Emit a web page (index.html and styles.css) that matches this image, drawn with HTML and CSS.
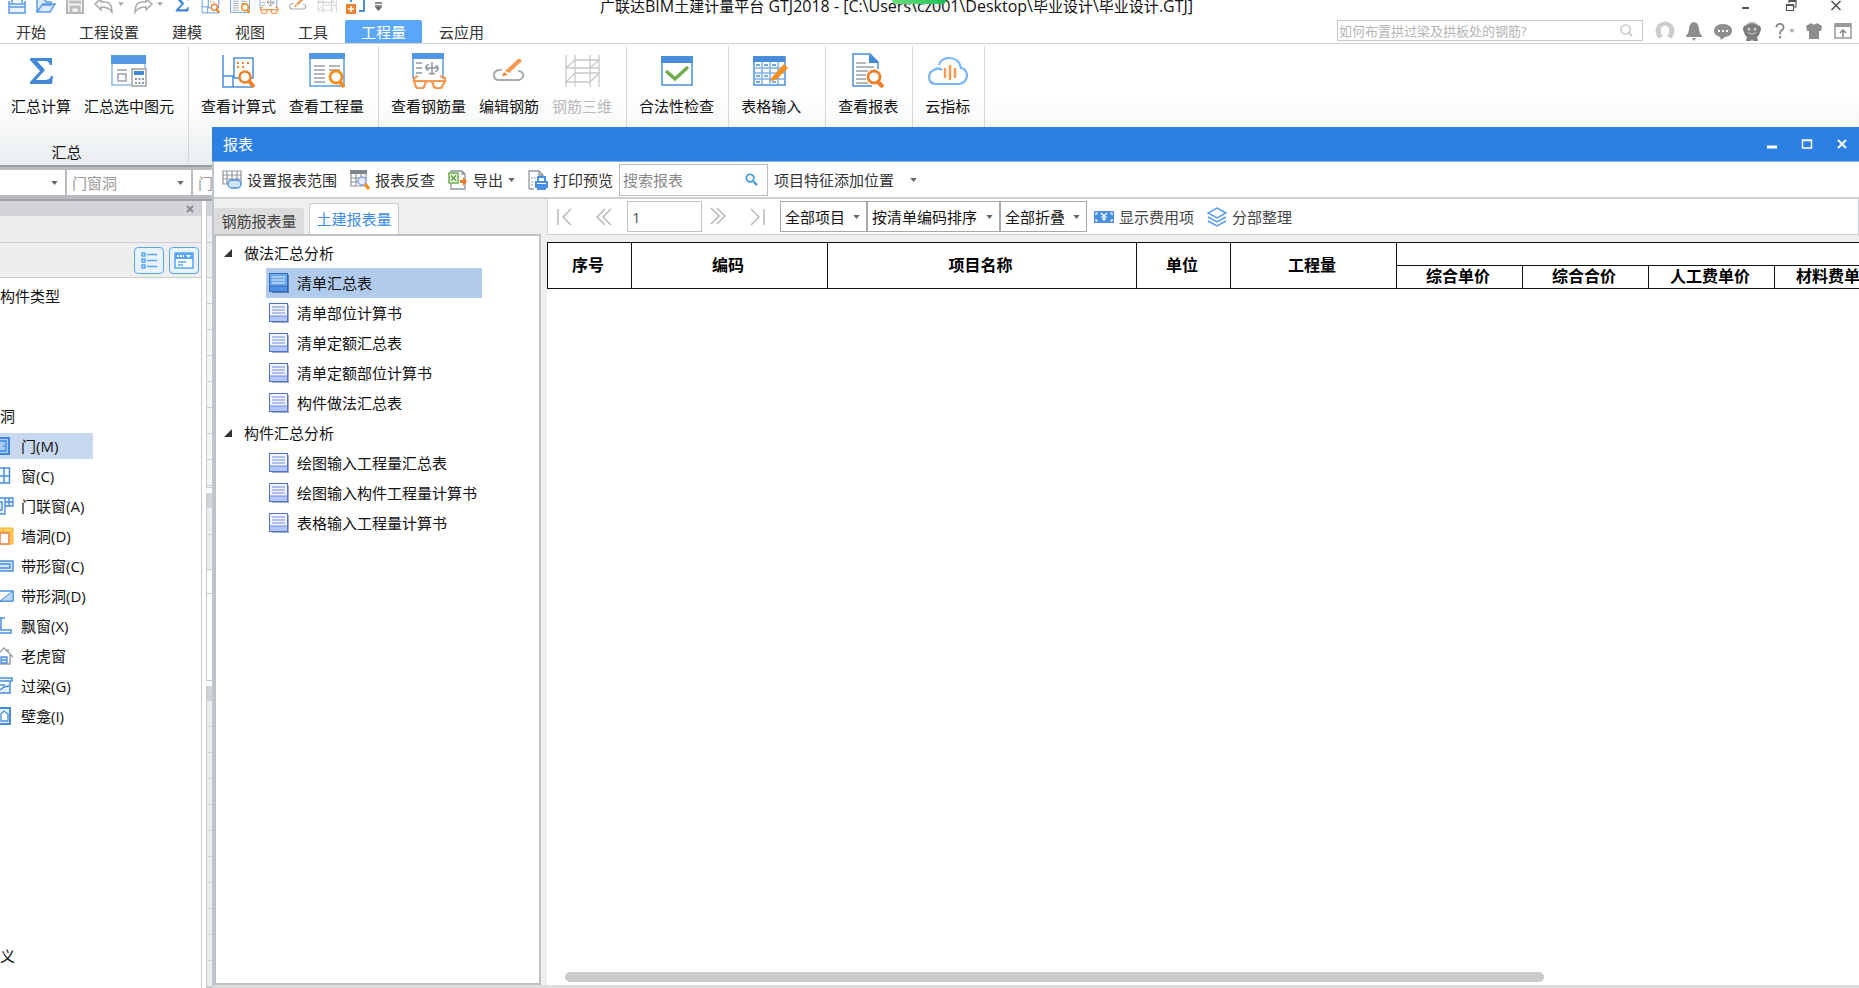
FILE: index.html
```html
<!DOCTYPE html>
<html lang="zh-CN">
<head>
<meta charset="utf-8">
<title>广联达BIM土建计量平台 GTJ2018</title>
<link rel="stylesheet" href="styles.css">
</head>
<body>
<svg class="sprite" aria-hidden="true">
  <symbol id="sigma" viewBox="0 0 24 26"><path fill="#4288d8" d="M1 0H23V7H21Q20 3 16 3H8L16 12 7 22H16Q21 22 22 18H24L23 26H1V24L11 13 1 2Z"/></symbol>
  <symbol id="formula" viewBox="0 0 36 36"><path d="M2 2V34H32M2 23H12V34" fill="none" stroke="#4a8edb" stroke-width="1.500"/><rect x="13" y="5" width="19" height="20" fill="#fff" stroke="#4a8edb" stroke-width="1.500"/><path d="M16 10H30M16 14H24" stroke="#f08030" stroke-width="2" stroke-dasharray="2 3"/><circle cx="24" cy="24" r="5.500" fill="#fff" stroke="#f0802c" stroke-width="2.500"/><path d="M28 28L33 34" stroke="#f0802c" stroke-width="4"/></symbol>
  <symbol id="quantity" viewBox="0 0 36 36"><rect x="1" y="1" width="34" height="32" fill="#fff" stroke="#5a9be6" stroke-width="1.500"/><path fill="#5398e6" d="M0 0H36V6H0Z"/><path d="M5 13H16M5 17H16M5 21H16M5 25H16M5 29H16M20 13H31M20 17H31" stroke="#98a0a8" stroke-width="1.500"/><circle cx="27" cy="24" r="6" fill="#fff" stroke="#f0901e" stroke-width="2.800"/><path d="M31 29L35 34" stroke="#f0901e" stroke-width="4"/></symbol>
  <symbol id="rebar" viewBox="0 0 36 36"><path d="M2 26V1H32V26" fill="#fff" stroke="#5a9be6" stroke-width="1.500"/><path fill="#5398e6" d="M1 0H33V6H1Z"/><path d="M5 10H11M5 15H11M5 20H11M21 9V21M15 15H27M18 12C14 11 14 18 18 17M24 13C28 12 28 19 24 18M18 20Q20 22 24 20" fill="none" stroke="#8f979d" stroke-width="1.500"/><path d="M7 23L3 25V28M29 23L34 25V28M3 28H15L13 34Q9 37 5 34ZM21 28H34L31 34Q27 37 23 34ZM15 29Q18 27 21 29" fill="none" stroke="#f79850" stroke-width="2.200"/></symbol>
  <symbol id="edit" viewBox="0 0 36 36"><path d="M12 17H8Q3 18 3 22Q3 27 8 27H28Q33 25 32 21Q31 18 27 18" fill="none" stroke="#a4acb0" stroke-width="2"/><path d="M11 15L24 3 33 12 22 22H10Z" fill="#fff"/><path d="M14 18L27 6Q29 5 31 8L18 20Z" fill="#f79850"/><path d="M13 19L17 22 11 23Z" fill="#f08030"/></symbol>
  <symbol id="cage" viewBox="0 0 36 36"><path d="M2 2V34M11 2V34M26 2V34M35 2V34M2 15H26L35 7H11ZM2 29H26L35 20H11ZM2 15H35" fill="none" stroke="#c9c9c9" stroke-width="1.300"/></symbol>
  <symbol id="summary" viewBox="0 0 36 36"><path d="M1 4H34V15M20 32H1V4" fill="#fff" stroke="#8fb9e8" stroke-width="1.500"/><path fill="#5398e6" d="M0 2H35V11H0Z"/><path d="M6 17H16M22 17H29M7 21H15V28H7Z" fill="none" stroke="#98a0a8" stroke-width="1.500"/><rect x="21" y="16" width="14" height="17" fill="#fff" stroke="#98a0a8" stroke-width="1.500"/><path fill="#4288d8" d="M23 18H33V22H23Z"/><path d="M24 26H33M24 30H33" stroke="#8c949a" stroke-width="2" stroke-dasharray="2 1.500"/></symbol>
  <symbol id="check" viewBox="0 0 36 36"><rect x="3" y="4" width="30" height="28" fill="#fff" stroke="#4a8edb" stroke-width="1.500"/><path fill="#4a8edb" d="M2 3H34V10H2Z"/><path d="M7 18L16 26 29 14" fill="none" stroke="#6fad4d" stroke-width="3.500"/></symbol>
  <symbol id="sheet" viewBox="0 0 36 36"><rect x="1" y="4" width="31" height="28" fill="#fff" stroke="#4a8edb" stroke-width="1.500"/><path fill="#4a8edb" d="M0 3H32V9H0Z"/><path d="M1 15H32M1 20H32M1 26H32M9 9V32M17 9V32M25 9V32" stroke="#7fb2ea" stroke-width="1.500"/><path d="M3 12H7M11 12H15M19 12H23M3 23H7M11 23H15M3 29H7M19 29H23" stroke="#4a8edb" stroke-width="1.500"/><path d="M19 24L31 11 35 15 23 27 17 28Z" fill="#f0901e"/></symbol>
  <symbol id="report" viewBox="0 0 36 36"><path d="M28 16V9L20 1H3V33H22" fill="#fff" stroke="#4a8edb" stroke-width="1.500"/><path d="M19 1V10H29Z" fill="#4288d8"/><path d="M6 10H16M6 14H24M6 18H18M6 22H16M6 26H16M6 30H18" stroke="#98a0a8" stroke-width="1.500"/><circle cx="24" cy="24" r="6" fill="#fff" stroke="#f0802c" stroke-width="2.800"/><path d="M28 29L33 34" stroke="#f0802c" stroke-width="4"/></symbol>
  <symbol id="cloud" viewBox="0 0 40 36"><path d="M14 17Q10 14 6 17Q1 19 1 25Q2 31 8 31H31Q38 30 39 23Q39 16 33 15Q31 5 21 5Q13 5 11 12" fill="none" stroke="#78b6f8" stroke-width="2.200"/><path d="M17 15V25M22 12V27M27 15V25" stroke="#f79850" stroke-width="2.400"/></symbol>
  <symbol id="listdoc" viewBox="0 0 20 20"><path fill="#7d8dab" d="M3 2H20V20H3Z" opacity=".7"/><rect x=".5" y=".5" width="18" height="18" fill="#f2f5ff" stroke="#5273cc"/><path fill="#b4c7fc" d="M1 13H18V18H1Z"/><path d="M3 4H16M3 7H16M3 10H16M1 13H18" stroke="#6f8bd6"/></symbol>
  <symbol id="listdoc-on" viewBox="0 0 20 20"><path fill="#4a6a9c" d="M3 2H20V20H3Z" opacity=".8"/><rect x=".5" y=".5" width="18" height="18" fill="#6fa9ea" stroke="#2f68bd"/><path fill="#4f92e4" d="M1 13H18V18H1Z"/><path d="M3 4H16M3 7H16M3 10H16" stroke="#d9e9fb"/><path d="M1 13H18" stroke="#2f68bd"/></symbol>
  <symbol id="caret" viewBox="0 0 8 5"><path fill="currentColor" d="M0 0H8L4 5Z"/></symbol>
</svg>

<header class="titlebar">
  <div class="quick">
    <button aria-label="新建"><svg viewBox="0 0 20 20"><path d="M2 7V19H18V7M5 9V0H15V9M2 10H18M2 13H18" fill="#eaf3fe" stroke="#5a9be6" stroke-width="1.500"/></svg></button>
    <button aria-label="打开"><svg viewBox="0 0 20 20"><path d="M1 18V5H8L10 8H15V11H6L1 18H14L19 10H6" fill="#dcebfd" stroke="#5a9be6" stroke-width="1.500"/></svg></button>
    <button aria-label="保存"><svg viewBox="0 0 20 20"><path d="M2 0H18V19H2Z" fill="#f2f2f2" stroke="#b4b4b4" stroke-width="2"/><path d="M4 8H16M6 19V13H14V19" fill="none" stroke="#bdbdbd" stroke-width="3"/></svg></button>
    <button class="split" aria-label="撤销"><svg viewBox="0 0 20 20"><path d="M1 10L7 5V8H11Q18 8 18 18Q15 13 7 13V16Z" fill="#fff" stroke="#a9a9a9" stroke-width="1.500"/></svg><svg class="caret"><use href="#caret"/></svg></button>
    <button class="split" aria-label="恢复"><svg viewBox="0 0 20 20"><path d="M19 10L13 5V8H9Q2 8 2 18Q5 13 13 13V16Z" fill="#fff" stroke="#a9a9a9" stroke-width="1.500"/></svg><svg class="caret"><use href="#caret"/></svg></button>
    <button aria-label="汇总计算"><svg viewBox="-4 -1 26 26"><use href="#sigma" width="18" height="24"/></svg></button>
    <button aria-label="查看计算式"><svg><use href="#formula"/></svg></button>
    <button aria-label="查看工程量"><svg><use href="#quantity"/></svg></button>
    <button aria-label="查看钢筋量"><svg><use href="#rebar"/></svg></button>
    <button aria-label="编辑钢筋"><svg><use href="#edit"/></svg></button>
    <button aria-label="钢筋三维"><svg><use href="#cage"/></svg></button>
    <button aria-label="添加"><svg viewBox="0 0 20 20"><path d="M11 2H18V17H13M5 8V2" fill="none" stroke="#4a8edb" stroke-width="2"/><path fill="#f0802c" d="M0 10H10V20H0Z"/><path d="M5 12V18M2 15H8" stroke="#fff" stroke-width="1.500"/></svg></button>
    <button aria-label="自定义工具栏"><svg viewBox="0 0 20 20"><path d="M0 9H7M0 12H7" stroke="#666" stroke-width="1.500"/><path fill="#666" d="M0 13H7L3.500 17Z"/></svg></button>
  </div>
  <h1 class="app-title">广联达<span>BIM</span>土建计量平台<span> GTJ2018 - [C:\Users\cz001\Desktop\</span>毕业设计<span>\</span>毕业设计<span>.GTJ]</span></h1>
  <span class="blob"></span>
  <div class="win-controls">
    <button aria-label="最小化"><svg viewBox="0 0 20 20"><path d="M6 11H13" stroke="#555" stroke-width="2"/></svg></button>
    <button aria-label="还原"><svg viewBox="0 0 20 20"><path d="M5.500 7.500H12.500V13.500H5.500ZM8 6V3.500H15V10H13M5 8.500H13M8 4.500H15" fill="none" stroke="#555" stroke-width="1.200"/></svg></button>
    <button aria-label="关闭"><svg viewBox="0 0 20 20"><path d="M5.500 4L14.500 13M14.500 4L5.500 13" stroke="#555" stroke-width="1.600"/></svg></button>
  </div>
</header>

<nav class="menubar">
  <a href="#">开始</a><a href="#">工程设置</a><a href="#">建模</a><a href="#">视图</a><a href="#">工具</a><a href="#" class="active">工程量</a><a href="#">云应用</a>
  <div class="menu-right">
    <div class="help-search">
      <input type="text" aria-label="帮助搜索" placeholder="如何布置拱过梁及拱板处的钢筋?">
      <svg viewBox="0 0 16 16"><circle cx="7" cy="7" r="5" fill="none" stroke="#bbb" stroke-width="1.300"/><path d="M10.500 10.500L14 14" stroke="#bbb" stroke-width="1.500"/></svg>
    </div>
    <div class="menu-icons">
      <button aria-label="用户"><svg viewBox="0 0 20 20"><circle cx="10" cy="10" r="9.500" fill="#cdcdcd"/><path d="M3 20Q5 16 8 15Q5 12 6 7Q10 2 14 7Q15 12 12 15Q15 16 17 20Z" fill="#fff"/></svg></button>
      <button aria-label="通知"><svg viewBox="0 0 20 20"><path fill="#8e8e8e" d="M10 1Q15 2 15 8Q15 12 18 15V16H2V15Q5 12 5 8Q5 2 10 1ZM8 17H12L10 20Z"/></svg></button>
      <button aria-label="消息"><svg viewBox="0 0 20 20"><path fill="#8e8e8e" d="M10 3C4 3 1 6 1 10Q1 14 7 16L8 19 12 16Q19 15 19 10C19 6 16 3 10 3Z"/><path d="M5 10H15" stroke="#fff" stroke-width="2" stroke-dasharray="2 2"/></svg></button>
      <button aria-label="助手"><svg viewBox="0 0 20 20"><path fill="#a5a5a5" d="M5 3Q10-1 15 3L17 7H3Z"/><path fill="#7d7d7d" d="M2 5Q10 1 18 5Q20 8 18 11Q18 14 15 16L16 20H11L10 18 9 20H4L5 16Q2 14 2 11Q0 8 2 5Z"/><circle cx="7" cy="8" r="1.500" fill="#ccc"/><circle cx="13" cy="8" r="1.500" fill="#ccc"/><path d="M6 11Q10 15 14 11" fill="none" stroke="#ccc"/></svg></button>
      <button class="split" aria-label="帮助"><svg viewBox="0 0 20 20"><path d="M6 6Q6 2 10 2Q14 2 14 6Q14 8 11 10Q10 11 10 14" fill="none" stroke="#888" stroke-width="2"/><circle cx="10" cy="17" r="1.400" fill="#888"/></svg><svg class="caret"><use href="#caret"/></svg></button>
      <button aria-label="皮肤"><svg viewBox="0 0 20 20"><path fill="#8e8e8e" d="M2 5L7 2Q10 5 13 2L18 5 17 10H15V18H5V10H3Z"/></svg></button>
      <button aria-label="收起"><svg viewBox="0 0 20 20"><path d="M2 3H18V17H2Z" fill="none" stroke="#999" stroke-width="1.500"/><path fill="#999" d="M2 2H18V6H2Z"/><path d="M10 16V10M7 12L10 9 13 12" fill="none" stroke="#888" stroke-width="1.500"/></svg></button>
    </div>
  </div>
</nav>

<section class="ribbon">
  <div class="group">
    <div class="commands">
      <button><svg viewBox="-6 -5 36 36"><use href="#sigma" width="24" height="26"/></svg>汇总计算</button>
      <button><svg><use href="#summary"/></svg>汇总选中图元</button>
    </div>
    <span class="group-name">汇总</span>
  </div>
  <div class="group"><div class="commands">
      <button><svg><use href="#formula"/></svg>查看计算式</button>
      <button><svg><use href="#quantity"/></svg>查看工程量</button>
  </div></div>
  <div class="group"><div class="commands">
      <button><svg><use href="#rebar"/></svg>查看钢筋量</button>
      <button><svg><use href="#edit"/></svg>编辑钢筋</button>
      <button disabled><svg><use href="#cage"/></svg>钢筋三维</button>
  </div></div>
  <div class="group"><div class="commands"><button><svg><use href="#check"/></svg>合法性检查</button></div></div>
  <div class="group roomy"><div class="commands"><button><svg><use href="#sheet"/></svg>表格输入</button></div></div>
  <div class="group"><div class="commands"><button><svg><use href="#report"/></svg>查看报表</button></div></div>
  <div class="group"><div class="commands"><button><svg class="wide"><use href="#cloud"/></svg>云指标</button></div></div>
</section>

<div class="combos">
  <div class="select narrow"><select aria-label="楼层"><option></option></select><svg class="caret"><use href="#caret"/></svg></div>
  <div class="select"><select aria-label="构件分类"><option>门窗洞</option></select><svg class="caret"><use href="#caret"/></svg></div>
  <div class="select"><select aria-label="构件"><option>门</option></select><svg class="caret"><use href="#caret"/></svg></div>
</div>

<main class="workspace">
  <aside class="nav-panel">
    <div class="panel-head"><button aria-label="关闭面板"><svg viewBox="0 0 8 8"><path d="M1 1L7 7M7 1L1 7" stroke="#888" stroke-width="1.800"/></svg></button></div>
    <div class="panel-band"></div>
    <div class="panel-tools">
      <button aria-label="列表"><svg viewBox="0 0 20 20"><path d="M3 3H6V6H3ZM3 9H6V12H3ZM3 15H6V18H3ZM8 4.500H18M8 10.500H18M8 16.500H18" fill="none" stroke="#58a6f5" stroke-width="1.500"/></svg></button>
      <button aria-label="窗格"><svg viewBox="0 0 20 20"><path d="M1 3H19V18H1Z" fill="#fff" stroke="#58a6f5" stroke-width="1.500"/><path fill="#58a6f5" d="M1 3H19V9H1Z"/><path d="M3 6H10" stroke="#fff" stroke-width="2" stroke-dasharray="2 1"/><path fill="#fff" d="M12 5H17L14.500 8Z"/><path d="M4 12H12M4 15H9" stroke="#58a6f5" stroke-width="1.500"/></svg></button>
    </div>
    <div class="panel-body">
      <p class="common">构件类型</p>
      <p class="category">洞</p>
      <ul class="parts">
        <li class="selected"><svg viewBox="4 0 14 18"><path d="M0 1H13V17H0" fill="#a9cdf3" stroke="#3f87d8" stroke-width="2"/><path d="M4 4H10V14H4M8 8V10" fill="none" stroke="#3f87d8" stroke-width="1.300"/></svg>门(M)</li>
        <li><svg viewBox="4 0 14 18"><path d="M0 1H13.500V16H0M0 9H13M8 1V16" fill="#f2f8ff" stroke="#4a8edb" stroke-width="1.500"/></svg>窗(C)</li>
        <li><svg viewBox="4 0 14 18"><path d="M0 1H17V9H9V17H0M9 1V9M13 1V9M9 5H17M0 5H6V13H0" fill="#e7f1fd" stroke="#4a8edb" stroke-width="1.300"/></svg>门联窗(A)</li>
        <li><svg viewBox="4 0 14 18"><path fill="#ffd062" stroke="#f5b32c" d="M0 1H17V17H0ZM0 5H17M7 1V5M12 5V17M12 9H17M12 13H17"/><path fill="#fff" stroke="#f08050" stroke-width="1.500" d="M4 6H13V17H4Z"/></svg>墙洞(D)</li>
        <li><svg viewBox="4 0 14 18"><path fill="#d7e8fa" stroke="#4a8edb" stroke-width="1.500" d="M0 4H17V14H0M0 7H14V11H0"/></svg>带形窗(C)</li>
        <li><svg viewBox="4 0 14 18"><path fill="#fff" stroke="#4a8edb" stroke-width="1.500" d="M0 4H17V14H0"/><path fill="#bcd7f4" stroke="#4a8edb" d="M4 14L17 4V14Z"/></svg>带形洞(D)</li>
        <li><svg viewBox="4 0 14 18"><path fill="none" stroke="#4a8edb" stroke-width="1.500" d="M4 1H9M5 1V13H15V16H4"/></svg>飘窗(X)</li>
        <li><svg viewBox="4 0 14 18"><path fill="none" stroke="#9aa3aa" stroke-width="1.500" d="M0 9L8 1 17 10M14 8V17H0M12 2V5"/><path fill="#e7f1fd" stroke="#4a8edb" stroke-width="1.300" d="M5 10H11V16H5ZM5 13H11"/></svg>老虎窗</li>
        <li><svg viewBox="4 0 14 18"><path fill="#e7f1fd" stroke="#4a8edb" stroke-width="1.500" d="M0 1H16V4H0M14 4V16H0M4 13L8 10 13 9M4 8H9"/></svg>过梁(G)</li>
        <li><svg viewBox="4 0 14 18"><path fill="#e7f1fd" stroke="#4a8edb" stroke-width="2" d="M0 1H14V17H0"/><path fill="#fff" stroke="#4a8edb" stroke-width="1.300" d="M5 14V7L8 4 12 7V14Z"/></svg>壁龛(I)</li>
      </ul>
      <p class="custom">义</p>
    </div>
  </aside>
  <div class="rear">
    <div class="rear-pane first"><div class="panel-head"></div><div class="panel-band"></div><div class="panel-tools"></div><div class="lines"></div></div>
    <div class="rear-pane second"><div class="panel-head"></div><div class="panel-band"></div><div class="panel-tools"></div><div class="grip">⋮</div></div>
    <div class="rear-pane third"><div class="panel-head"></div><div class="lines grey"></div></div>
  </div>
</main>

<section class="dialog" role="dialog" aria-labelledby="dlg-title">
  <header class="dialog-title">
    <h2 id="dlg-title">报表</h2>
    <div class="dialog-controls">
      <button aria-label="最小化"><svg viewBox="0 0 20 20"><path d="M5 13H15" stroke="#fff" stroke-width="3"/></svg></button>
      <button aria-label="最大化"><svg viewBox="0 0 20 20"><path d="M5.500 6H14.500V14H5.500ZM5 6.500H15" fill="none" stroke="#fff" stroke-width="1.500"/></svg></button>
      <button aria-label="关闭"><svg viewBox="0 0 20 20"><path d="M6 6L14 14M14 6L6 14" stroke="#fff" stroke-width="2"/></svg></button>
    </div>
  </header>
  <div class="toolbar">
    <div class="tools">
      <button><svg viewBox="0 0 20 20"><path d="M1 1H19V14H1ZM1 5H19M1 9H19M5 1V14M10 1V14M15 1V14" fill="#fff" stroke="#8e979e" stroke-width="1.200"/><rect x="6" y="10" width="13" height="8" rx="4" fill="#cfe4fb" stroke="#4a8edb" stroke-width="1.300"/></svg>设置报表范围</button>
      <button><svg viewBox="0 0 20 20"><path d="M1 1H16V16H1ZM1 8H16M1 12H16M6 1V16M11 1V16" fill="#fff" stroke="#8e979e" stroke-width="1.200"/><path fill="#7b868e" d="M0 0H17V4H0Z"/><circle cx="12" cy="11" r="4" fill="#e6ecff" stroke="#8ba4e4" stroke-width="1.500"/><path d="M15 14L19 19" stroke="#f0901e" stroke-width="3.500"/></svg>报表反查</button>
      <button><svg viewBox="0 0 20 20"><path d="M3 5V1H14L17 4V19H3V14M14 1V4H17" fill="#fff" stroke="#8e979e" stroke-width="1.300"/><rect x="1" y="3" width="9" height="10" fill="#eaf5e3" stroke="#6fad4d" stroke-width="1.500"/><path d="M3 5.500L8 10.500M8 5.500L3 10.500" stroke="#5d9c3d" stroke-width="1.300"/><path fill="#f07820" d="M12 10H15V7L19 11.500 15 16V13H12Z"/></svg>导出<svg class="caret"><use href="#caret"/></svg></button>
      <button><svg viewBox="0 0 20 20"><path d="M1 19V1H11L15 5V8M11 1V5H15M1 19H6" fill="none" stroke="#8e979e" stroke-width="1.300"/><path d="M3 8H8M3 12H6M3 15H6" stroke="#999" stroke-dasharray="2 1"/><path d="M10 11V7H17V11M8 12H19V17H8ZM10 15H17V19H10Z" fill="#fff" stroke="#4a90e2" stroke-width="2"/></svg>打印预览</button>
    </div>
    <div class="report-search"><input type="text" aria-label="搜索报表" placeholder="搜索报表"><svg viewBox="0 0 14 14"><circle cx="5.500" cy="5.500" r="4" fill="none" stroke="#4a9fd4" stroke-width="2"/><path d="M9 9L13 13" stroke="#4a9fd4" stroke-width="2.500"/></svg></div>
    <button class="position">项目特征添加位置<svg class="caret"><use href="#caret"/></svg></button>
  </div>
  <div class="dialog-main">
    <aside class="reports">
      <div class="tabs" role="tablist"><button role="tab">钢筋报表量</button><button role="tab" aria-selected="true">土建报表量</button></div>
      <div class="tree">
        <h3><svg viewBox="0 0 8 8"><path fill="#333" d="M8 0V8H0Z"/></svg>做法汇总分析</h3>
        <ul>
          <li class="selected"><svg><use href="#listdoc-on"/></svg>清单汇总表</li>
          <li><svg><use href="#listdoc"/></svg>清单部位计算书</li>
          <li><svg><use href="#listdoc"/></svg>清单定额汇总表</li>
          <li><svg><use href="#listdoc"/></svg>清单定额部位计算书</li>
          <li><svg><use href="#listdoc"/></svg>构件做法汇总表</li>
        </ul>
        <h3><svg viewBox="0 0 8 8"><path fill="#333" d="M8 0V8H0Z"/></svg>构件汇总分析</h3>
        <ul>
          <li><svg><use href="#listdoc"/></svg>绘图输入工程量汇总表</li>
          <li><svg><use href="#listdoc"/></svg>绘图输入构件工程量计算书</li>
          <li><svg><use href="#listdoc"/></svg>表格输入工程量计算书</li>
        </ul>
      </div>
    </aside>
    <div class="sheet">
      <div class="pager">
        <button class="step" aria-label="首页"><svg viewBox="0 0 20 20"><path d="M3 2V18M16 2L8 10 16 18"/></svg></button>
        <button class="step" aria-label="上一页"><svg viewBox="0 0 20 20"><path d="M11 2L3 10 11 18M17 2L9 10 17 18"/></svg></button>
        <div class="page-no">
          <input type="text" aria-label="页码" value="1">
          <button class="step" aria-label="下一页"><svg viewBox="0 0 20 20"><path d="M3 2L11 10 3 18M9 2L17 10 9 18"/></svg></button>
        </div>
        <button class="step" aria-label="末页"><svg viewBox="0 0 20 20"><path d="M17 2V18M4 2L12 10 4 18"/></svg></button>
        <div class="filters">
          <div class="select items"><select aria-label="项目"><option>全部项目</option></select><svg class="caret"><use href="#caret"/></svg></div>
          <div class="select order"><select aria-label="排序"><option>按清单编码排序</option></select><svg class="caret"><use href="#caret"/></svg></div>
          <div class="select items"><select aria-label="折叠"><option>全部折叠</option></select><svg class="caret"><use href="#caret"/></svg></div>
        </div>
        <div class="tools">
          <button><svg viewBox="0 0 20 20"><path fill="#4a90e2" d="M0 4H20V16H0Z"/><path d="M4 6H2V8M16 6H18V8M4 14H2V12M16 14H18V12M7 6L10 9 13 6M10 9V14M7 10H13M8 12H12" fill="none" stroke="#fff" stroke-width="1.200"/></svg>显示费用项</button>
          <button><svg viewBox="0 0 20 20"><path d="M10 1L19 6 10 11 1 6ZM1 10L10 15 19 10M1 14L10 19 19 14" fill="none" stroke="#5a9be6" stroke-width="1.500"/></svg>分部整理</button>
        </div>
      </div>
      <div class="grid-area">
        <table>
          <colgroup><col class="c-no"><col class="c-code"><col class="c-name"><col class="c-unit"><col class="c-qty"><col class="c-fee"><col class="c-fee"><col class="c-fee"><col class="c-fee"></colgroup>
          <thead>
            <tr><th rowspan="2">序号</th><th rowspan="2">编码</th><th rowspan="2">项目名称</th><th rowspan="2">单位</th><th rowspan="2">工程量</th><th colspan="4" class="blank"></th></tr>
            <tr class="fees"><th>综合单价</th><th>综合合价</th><th>人工费单价</th><th>材料费单价</th></tr>
          </thead>
        </table>
        <div class="scrollbar"><span></span></div>
      </div>
    </div>
  </div>
</section>
</body>
</html>
```
FILE: styles.css
```css
* { box-sizing: border-box; }
body {
  margin: 0;
  height: 100vh;
  overflow: hidden;
  position: relative;
  display: flex;
  flex-direction: column;
  background: #fff;
  color: #111;
  font: 15px/20px "Open Sans", "Noto Sans CJK SC", sans-serif;
}
button, input, select { font: inherit; color: inherit; border-radius: 0; }
button { display: flex; align-items: center; padding: 0; border: 0; background: none; white-space: nowrap; }
button > svg { width: 20px; height: 20px; flex: none; }
h1, h2, h3, p, ul { margin: 0; padding: 0; font-size: 15px; font-weight: normal; }
ul { list-style: none; }
.sprite { display: none; }
svg.caret { width: 7px; height: 4px; flex: none; color: #666; }

.titlebar { position: relative; flex: none; height: 18px; display: flex; padding: 0 13px 4px 7px; overflow: hidden; }
.quick { display: flex; gap: 9px; align-items: flex-end; flex: none; }
.split { gap: 4px; }
.split .caret { color: #aaa; }
.app-title { flex: 1; margin-left: 205px; line-height: 12px; white-space: nowrap; }
.app-title span { font-size: 16px; white-space: pre; }
.blob { position: absolute; top: 0; left: 48%; width: 54px; height: 4px; border-radius: 0 0 12px 12px; background: linear-gradient(90deg, #6be07e, #1dbd55); box-shadow: 0 2px 8px #0003; }
.win-controls { display: flex; gap: 25px; align-items: center; }

.menubar { flex: none; height: 26px; display: flex; gap: 1px; align-items: flex-end; border-bottom: 1px solid #d4d4d4; }
.menubar a { height: 23px; padding: 0 16px; line-height: 24px; color: #333; text-decoration: none; }
.menubar .active { background: #5aa6f8; color: #fff; border-radius: 2px 2px 0 0; }
.menu-right { flex: 1; display: flex; justify-content: flex-end; gap: 12px; padding-bottom: 2px; }
.help-search { width: 306px; height: 21px; display: flex; align-items: center; border: 1px solid #c8c8c8; padding-right: 8px; }
.help-search input { flex: 1; min-width: 0; height: 19px; padding: 0 1px; border: 0; font-size: 13px; background: none; }
.help-search svg { width: 15px; height: 15px; }
.help-search input::placeholder { color: #b5b5b5; opacity: 1; }
.menu-icons { display: flex; gap: 9px; align-items: center; padding-right: 6px; }
.menu-icons .split { gap: 0; }
.menu-icons .split > svg:first-child { width: 18px; }

.ribbon { flex: none; height: 123px; display: flex; padding-top: 2px; background: linear-gradient(#fff 45%, #e9edef); border-bottom: 2px solid #9a9da0; }
.group { display: flex; flex-direction: column; justify-content: space-between; padding: 7px 14px 0 12px; border-right: 1px solid #d5d7d8; margin-bottom: 3px; }
.group:first-child { padding: 7px 14px 0 11px; }
.group.roomy { padding-right: 24px; }
.commands { display: flex; gap: 13px; }
.commands button { flex-direction: column; gap: 7px; color: #111; }
.commands button > svg { width: 36px; height: 36px; }
.commands button > svg.wide { width: 40px; }
.commands button:disabled { color: #b9b9b9; }
.group-name { align-self: center; line-height: 20px; padding-right: 52px; }

.combos { flex: none; height: 34px; display: flex; gap: 2px; padding: 3px 0 4px; background: #b9bbc0; border-bottom: 2px solid #9fa2a7; }
.select { display: grid; align-items: center; flex: none; width: 124px; background: #fff; }
.select > * { grid-area: 1 / 1; }
.select select { appearance: none; width: 100%; height: 100%; padding: 0 4px; border: 1px solid #c3c3c3; background: transparent; }
.select .caret { justify-self: end; margin-right: 7px; pointer-events: none; }
.select.narrow { width: 65px; }
.combos select { border: 0; padding-left: 5px; color: #999; }

.workspace { flex: 1; min-height: 0; display: flex; gap: 4px; }
.nav-panel { flex: none; width: 202px; border-right: 1px solid #c5c8cc; display: flex; flex-direction: column; }
.panel-head { flex: none; height: 15px; background: #d3d4d9; display: flex; justify-content: flex-end; align-items: center; padding-right: 7px; }
.panel-head svg { width: 8px; height: 8px; }
.panel-band { flex: none; height: 27px; background: #eee; border-bottom: 1px solid #ccced2; }
.panel-tools { flex: none; height: 35px; display: flex; gap: 5px; align-items: center; justify-content: flex-end; padding-right: 2px; background: #eee; border-bottom: 1px solid #ccced2; }
.panel-tools button { width: 30px; height: 27px; justify-content: center; border: 1px solid #58a6f5; border-radius: 4px; background: #e8f3fe; }
.panel-body { flex: 1; padding-top: 8px; overflow: hidden; }
.category { margin-top: 100px; }
.parts { margin-top: 7px; }
.parts li { display: flex; align-items: center; gap: 7px; width: 93px; height: 26px; margin-bottom: 4px; white-space: nowrap; }
.parts svg { width: 14px; height: 18px; flex: none; }
.parts .selected { background: #c8d8f0; }
.custom { margin-top: 217px; }

.rear { flex: 1; display: flex; flex-direction: column; gap: 5px; background: #fff; }
.rear-pane { flex: none; border: 1px solid #c5c8cc; border-top: 0; display: flex; flex-direction: column; }
.rear .first { height: 287px; }
.rear .second { height: 188px; }
.rear .third { flex: 1; }
.lines { flex: 1; background: repeating-linear-gradient(#f6f6f6 0 25px, #cfd1d4 25px 26px); }
.lines.grey { background: repeating-linear-gradient(#ececed 0 25px, #cfd1d4 25px 26px); }
.grip { height: 24px; border-bottom: 1px solid #ccc; color: #777; }

.dialog { position: absolute; top: 127px; left: 212px; right: 0; bottom: 0; display: flex; flex-direction: column; background: #efefef; border-left: 2px solid #c0c6d0; border-bottom: 3px solid #dcdddf; }
.dialog-title { flex: none; height: 35px; margin-left: -2px; padding: 0 7px 0 11px; display: flex; align-items: center; justify-content: space-between; background: #2d7fe2; border-bottom: 1px solid #86b0e6; color: #fff; }
.dialog-controls { display: flex; gap: 15px; }
.toolbar { flex: none; height: 37px; display: flex; align-items: center; gap: 6px; padding-left: 8px; background: #fff; border-bottom: 2px solid #cdd0d4; color: #333; }
.tools { display: flex; gap: 13px; }
.tools button { gap: 5px; }
.report-search { display: flex; align-items: center; width: 149px; height: 32px; padding-right: 9px; border: 1px solid #bcbcbc; }
.report-search input { flex: 1; min-width: 0; border: 0; padding: 0 3px; }
.report-search input::placeholder { color: #888; opacity: 1; }
.report-search svg { width: 13px; height: 13px; }
.position { gap: 16px; }
.position > svg.caret, .tools button > svg.caret { width: 7px; height: 4px; }
.split > svg.caret { width: 6px; height: 4px; }

.dialog-main { flex: 1; min-height: 0; display: flex; gap: 6px; }
.reports { flex: none; width: 327px; display: flex; flex-direction: column; }
.tabs { height: 35px; display: flex; gap: 5px; align-items: flex-end; }
.tabs button { height: 26px; width: 90px; justify-content: center; background: #dcdcdc; color: #444; border-radius: 3px 3px 0 0; }
.tabs button[aria-selected] { height: 31px; background: #fff; color: #3d8ee8; border: 1px solid #c8cacc; border-bottom: 0; }
.tree { flex: 1; border: 2px solid #bfc2c5; background: #fff; padding-top: 2px; }
.tree h3 { display: flex; align-items: center; gap: 12px; height: 30px; padding-left: 8px; }
.tree h3 svg { width: 8px; height: 8px; }
.tree li { display: flex; align-items: center; gap: 8px; width: 216px; height: 30px; margin-left: 50px; padding-left: 3px; white-space: nowrap; }
.tree li svg { width: 20px; height: 20px; flex: none; }
.tree .selected { background: #b1cbec; }

.sheet { flex: 1; min-width: 0; display: flex; flex-direction: column; gap: 7px; }
.pager { flex: none; height: 36px; display: flex; align-items: center; gap: 7px; padding-left: 1px; background: #fff; border: 1px solid #cdd0d4; border-top: 0; }
.step { width: 32px; height: 30px; justify-content: center; }
.step svg { fill: none; stroke: #b8b8b8; stroke-width: 1.5; }
.page-no { display: flex; }
.page-no input { width: 75px; height: 31px; padding: 0 4px; border: 1px solid #bfc4ca; color: #555; }
.filters { display: flex; color: #111; }
.filters .select { height: 31px; }
.filters .items { width: 87px; }
.filters .order { width: 133px; }
.filters select { border-color: #a9a9a9; }
.pager .tools { color: #444; }
.grid-area { flex: 1; min-height: 0; display: flex; flex-direction: column; justify-content: space-between; background: #fff; overflow: hidden; }
table { table-layout: fixed; width: 1353px; border-collapse: collapse; }
th { height: 23px; padding: 0 3px 2px 0; border: 1px solid #111; font-size: 16px; line-height: 20px; color: #000; white-space: nowrap; }
.c-no { width: 84px; }
.c-code { width: 196px; }
.c-name { width: 309px; }
.c-unit { width: 94px; }
.c-qty { width: 166px; }
.c-fee { width: 126px; }
.scrollbar { padding: 0 24% 3px 18px; }
.scrollbar span { display: block; height: 10px; border-radius: 5px; background: #cbcbcb; }
```
